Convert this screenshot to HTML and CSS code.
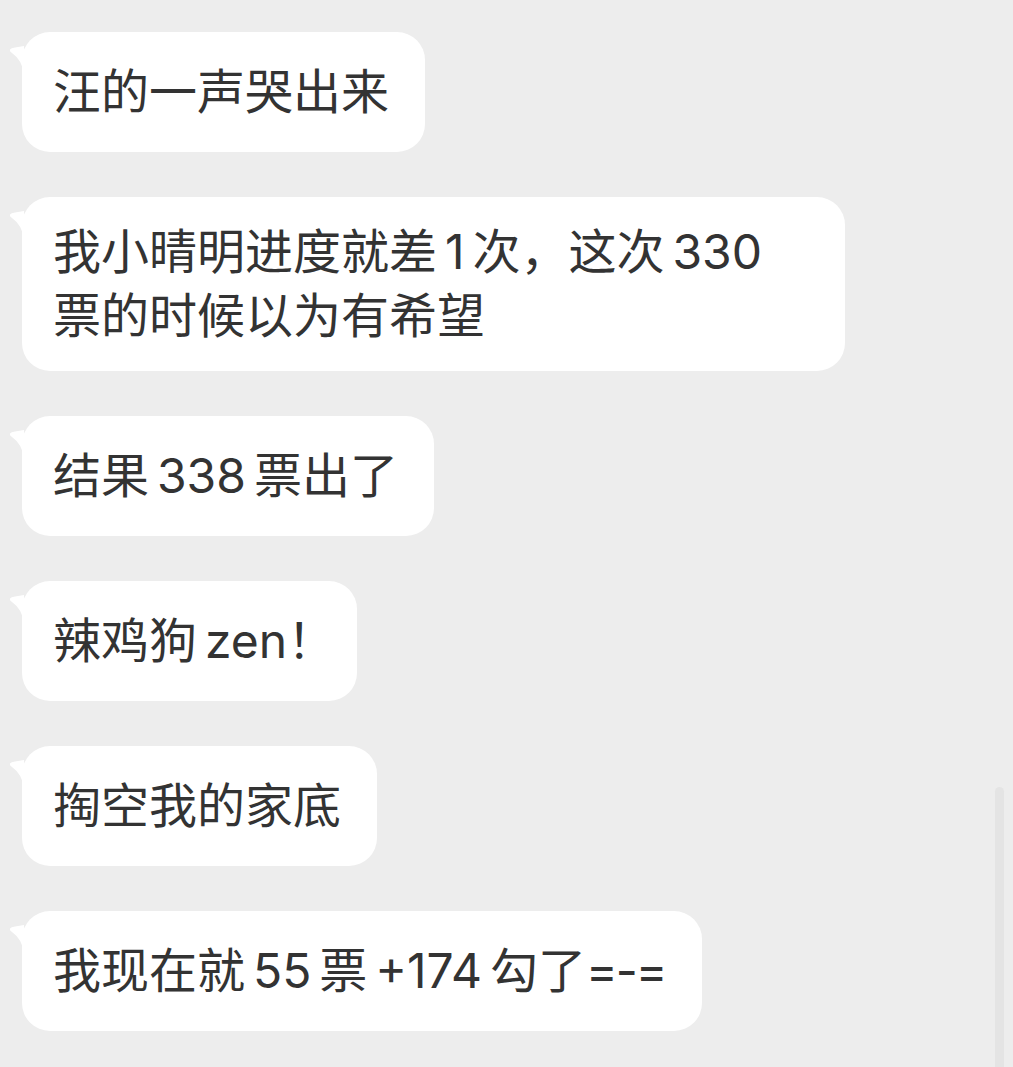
FILE: index.html
```html
<!DOCTYPE html>
<html lang="zh-CN">
<head>
  <meta charset="UTF-8"/>
  <meta name="viewport" content="width=device-width, initial-scale=1.0"/>
  <title>聊天</title>
  <link rel="stylesheet" href="styles.css">
</head>
<body>
  <div class="chat">
    <div class="msg">
      <svg class="tail" viewBox="0 0 14 28" width="14" height="28"><path d="M0 3.5 Q1 2 5 1.5 L14 0 L14 28 Q12 14 2 7 Q-0.8 5 0 3.5 Z" fill="#fff"/></svg>
      <p>汪的一声哭出来</p>
    </div>
    <div class="msg full">
      <svg class="tail" viewBox="0 0 14 28" width="14" height="28"><path d="M0 3.5 Q1 2 5 1.5 L14 0 L14 28 Q12 14 2 7 Q-0.8 5 0 3.5 Z" fill="#fff"/></svg>
      <p>我小晴明进度就差&#8198;1&#8198;次，这次&#8198;330<br>票的时候以为有希望</p>
    </div>
    <div class="msg">
      <svg class="tail" viewBox="0 0 14 28" width="14" height="28"><path d="M0 3.5 Q1 2 5 1.5 L14 0 L14 28 Q12 14 2 7 Q-0.8 5 0 3.5 Z" fill="#fff"/></svg>
      <p>结果&#8198;338&#8198;票出了</p>
    </div>
    <div class="msg">
      <svg class="tail" viewBox="0 0 14 28" width="14" height="28"><path d="M0 3.5 Q1 2 5 1.5 L14 0 L14 28 Q12 14 2 7 Q-0.8 5 0 3.5 Z" fill="#fff"/></svg>
      <p>辣鸡狗&#8198;zen<span class="bang">！</span></p>
    </div>
    <div class="msg">
      <svg class="tail" viewBox="0 0 14 28" width="14" height="28"><path d="M0 3.5 Q1 2 5 1.5 L14 0 L14 28 Q12 14 2 7 Q-0.8 5 0 3.5 Z" fill="#fff"/></svg>
      <p>掏空我的家底</p>
    </div>
    <div class="msg">
      <svg class="tail" viewBox="0 0 14 28" width="14" height="28"><path d="M0 3.5 Q1 2 5 1.5 L14 0 L14 28 Q12 14 2 7 Q-0.8 5 0 3.5 Z" fill="#fff"/></svg>
      <p>我现在就&#8198;55&#8198;票&#8198;+174&#8198;勾了<span class="face">=-=</span></p>
    </div>
  </div>
  <div class="scrollbar"></div>
</body>
</html>
```

FILE: styles.css
```css
body { margin: 0; background-color: #ededed; font-family: "Inter", "Noto Sans CJK SC", sans-serif; color: #333; height: 1067px; overflow: hidden; }
.chat { display: flex; flex-direction: column; align-items: flex-start; gap: 45px; padding: 32px 0 0 22px; }
.msg { position: relative; background-color: #fff; border-radius: 28px; min-height: 120px; max-width: 823px; box-sizing: border-box; padding: 22px 36px 22px 31px; display: flex; align-items: center; }
.msg.full { width: 823px; padding-top: 23px; padding-bottom: 23px; }
.msg p { margin: 0; font-size: 48px; line-height: 64px; white-space: nowrap; }
.bang { margin-right: -14px; }
.face { letter-spacing: -2px; }
.tail { position: absolute; left: -12px; top: 14px; }
.scrollbar { position: absolute; left: 995px; top: 787px; width: 9px; height: 290px; border-radius: 5px; background-color: #e4e4e4; }
```
